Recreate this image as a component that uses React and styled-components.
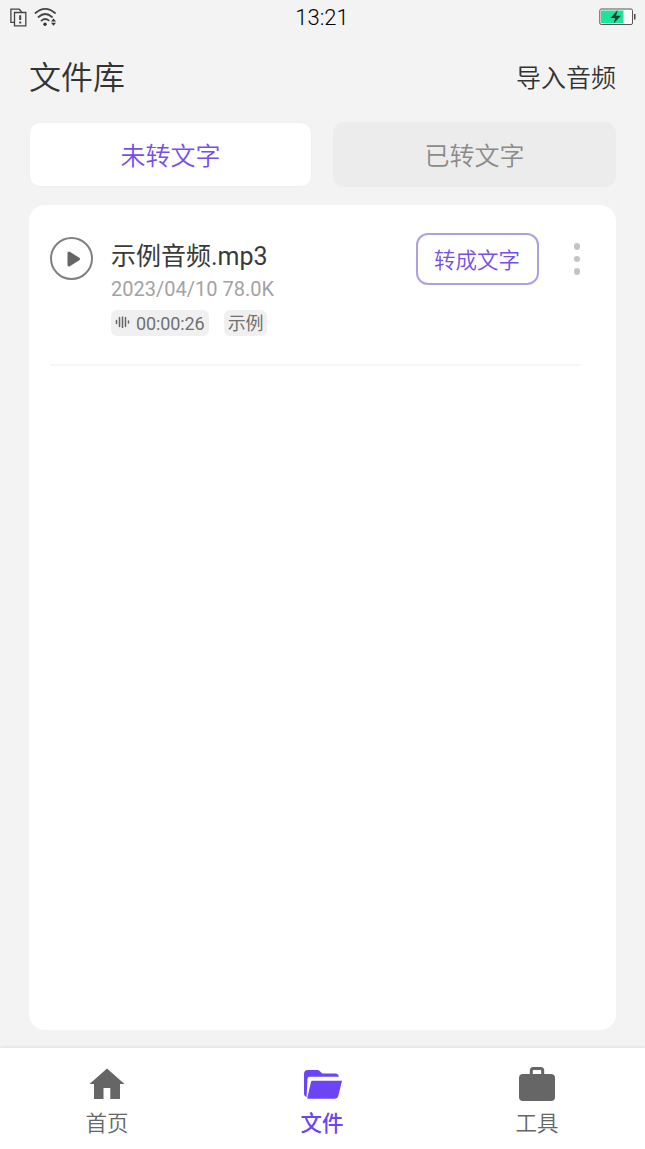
import React, { useState } from 'react';
import styled, { createGlobalStyle } from 'styled-components';

const tabs = ['未转文字', '已转文字'];

const files = [
  { name: '示例音频.mp3', date: '2023/04/10', size: '78.0K', duration: '00:00:26', tag: '示例' },
];

const HomeIcon = () => (
  <svg width="36" height="32" viewBox="0 0 36 32">
    <path d="M18 .5 35.5 16H31v15H21.300V20h-6.800v11H5V16H.5z" fill="currentColor" />
  </svg>
);

const FolderIcon = () => (
  <svg width="40" height="32" viewBox="0 0 40 32">
    <path
      d="M2 6a4 4 0 0 1 4-4h9.500a3 3 0 0 1 2.200 1l2.500 2.500H33.500a3.500 3.500 0 0 1 3.300 3.300H7.500a2 2 0 0 0-2 2L4.600 29C2.900 28.600 2 27.300 2 25.500z"
      fill="currentColor"
    />
    <path
      d="M10.700 12.700H40L36.300 28a3.500 3.500 0 0 1-3.400 2.700H5.900c-.5 0-.7-.3-.6-.8L9 14c.2-.9.8-1.300 1.700-1.300z"
      fill="currentColor"
    />
  </svg>
);

const BriefcaseIcon = () => (
  <svg width="38" height="36" viewBox="0 0 38 36">
    <path d="M13.300 10V4.500a2 2 0 0 1 2-2h7.400a2 2 0 0 1 2 2V10" fill="none" stroke="currentColor" strokeWidth="3" />
    <rect x="1" y="8" width="36" height="27" rx="4" fill="currentColor" />
  </svg>
);

const navItems = [
  { label: '首页', Icon: HomeIcon },
  { label: '文件', Icon: FolderIcon },
  { label: '工具', Icon: BriefcaseIcon },
];

const App = () => {
  const [activeTab, setActiveTab] = useState(0);
  const [activeNav, setActiveNav] = useState(1);

  return (
    <Screen>
      <GlobalStyle />
      <StatusBar>
        <StatusIcons>
          <svg width="17" height="19" viewBox="0 0 17 19" fill="none" stroke="#444" strokeWidth="1.300">
            <path d="M4.300 14.300H.9V1.200h8.300l2.500 2.800" />
            <path d="M4.500 4.500h11.300v13.300H4.500z" />
            <path d="M10.200 7.300v4.800M10.200 13.500v2" strokeWidth="2" />
          </svg>
          <svg width="23" height="20" viewBox="0 0 23 20" fill="none" stroke="#444" strokeWidth="1.800" strokeLinecap="round">
            <path d="M1.500 6Q11.200-2.300 21 6" />
            <path d="M4.500 10Q11.200 4 18 10" />
            <path d="M7.500 13.600Q11.200 10.500 14.700 13.400" />
            <circle cx="11" cy="17.200" r="1.700" fill="#333" stroke="none" />
            <path d="M19.500 11.500l2.500 3h-5zM19.500 18.700l2.500-3h-5z" fill="#333" stroke="none" />
          </svg>
        </StatusIcons>
        <Clock>13:21</Clock>
        <BatteryWrap>
          <svg width="37" height="18" viewBox="0 0 37 18">
            <rect x=".8" y="1" width="32.700" height="15.500" rx="1.500" fill="#fafafa" stroke="#555" />
            <path d="M2 2.500h22.500V15H2z" fill="#1fe39b" />
            <path d="M35 6h1.500v5.500H35z" fill="#444" />
            <path d="M18.700 2 11.500 10h4.700l-1.700 5.700 7.400-8h-4.800z" fill="#153f30" />
          </svg>
        </BatteryWrap>
      </StatusBar>

      <Header>
        <Title>文件库</Title>
        <ImportButton>导入音频</ImportButton>
      </Header>

      <Tabs>
        {tabs.map((tab, i) => (
          <Tab key={tab} $active={i === activeTab} onClick={() => setActiveTab(i)}>
            {tab}
          </Tab>
        ))}
      </Tabs>

      <Panel>
        {files.map((file) => (
          <FileRow key={file.name}>
            <PlayButton>
              <svg width="16" height="18" viewBox="0 0 16 18">
                <path d="M3 3v12L12.500 9z" fill="#666" stroke="#666" strokeWidth="3" strokeLinejoin="round" />
              </svg>
            </PlayButton>
            <FileInfo>
              <FileName>{file.name}</FileName>
              <FileMeta>
                {file.date} {file.size}
              </FileMeta>
              <Tags>
                <Tag>
                  <Waveform width="15" height="12" viewBox="0 0 15 12">
                    <path d="M1.500 4.500v3M4.500 1.500v9M7.500 1v10.500M10.500 1.500v9M13.500 5v2" />
                  </Waveform>
                  {file.duration}
                </Tag>
                <Tag>{file.tag}</Tag>
              </Tags>
            </FileInfo>
            <ConvertButton>转成文字</ConvertButton>
            <MoreButton>
              <Dot />
              <Dot />
              <Dot />
            </MoreButton>
          </FileRow>
        ))}
      </Panel>

      <BottomNav>
        {navItems.map(({ label, Icon }, i) => (
          <NavItem key={label} $active={i === activeNav} onClick={() => setActiveNav(i)}>
            <NavIcon>
              <Icon />
            </NavIcon>
            {label}
          </NavItem>
        ))}
      </BottomNav>
    </Screen>
  );
};

const GlobalStyle = createGlobalStyle`
  * {
    box-sizing: border-box;
  }

  body {
    margin: 0;
    background: #f3f3f3;
    font-family: Roboto, 'Noto Sans CJK SC', sans-serif;
    font-weight: 350;
  }

  button {
    margin: 0;
    padding: 0;
    border: none;
    background: none;
    font-family: inherit;
    font-weight: inherit;
    cursor: pointer;
  }

  svg {
    display: block;
    flex-shrink: 0;
  }
`;

const Screen = styled.div`
  display: flex;
  flex-direction: column;
  height: 100vh;
  overflow: hidden;
  background: #f3f3f3;
`;

const StatusBar = styled.div`
  display: grid;
  grid-template-columns: 1fr auto 1fr;
  align-items: center;
  height: 34px;
  padding: 0 9px 0 10px;
`;

const StatusIcons = styled.div`
  display: flex;
  align-items: center;
  gap: 7px;
`;

const Clock = styled.span`
  padding: 2px 2px 0 0;
  font-size: 22px;
  line-height: 32px;
  color: #000;
`;

const BatteryWrap = styled.div`
  justify-self: end;
`;

const Header = styled.header`
  display: flex;
  align-items: center;
  justify-content: space-between;
  height: 88px;
  padding: 0 29px;
`;

const Title = styled.h1`
  margin: 0;
  font-size: 32px;
  font-weight: inherit;
  line-height: 40px;
  color: #333;
`;

const ImportButton = styled.button`
  padding-top: 2px;
  font-size: 25px;
  line-height: 32px;
  color: #333;
`;

const Tabs = styled.div`
  display: grid;
  grid-template-columns: 1fr 1fr;
  gap: 21px;
  height: 65px;
  padding: 0 29px;
`;

const Tab = styled.button`
  padding-bottom: 1px;
  border: 1px solid ${({ $active }) => ($active ? '#f0f0f0' : '#ececec')};
  border-radius: 11px;
  background: ${({ $active }) => ($active ? '#fff' : '#ececec')};
  font-size: 25px;
  color: ${({ $active }) => ($active ? '#7350ea' : '#8a8a8a')};
`;

const Panel = styled.main`
  flex: 1;
  margin: 18px 29px;
  padding: 0 35px 0 21px;
  border-radius: 16px;
  background: #fff;
`;

const FileRow = styled.div`
  display: flex;
  align-items: flex-start;
  height: 161px;
  padding-top: 28px;
  border-bottom: 2px solid #f6f6f6;
`;

const PlayButton = styled.button`
  display: flex;
  align-items: center;
  justify-content: center;
  width: 43px;
  height: 43px;
  margin-top: 4px;
  padding-left: 4px;
  border: 2px solid #808080;
  border-radius: 50%;
`;

const FileInfo = styled.div`
  flex: 1;
  margin-left: 18px;
`;

const FileName = styled.div`
  margin-top: 6px;
  font-size: 25px;
  font-weight: 400;
  line-height: 36px;
  color: #3a3a3a;
`;

const FileMeta = styled.div`
  font-size: 20px;
  font-weight: 400;
  line-height: 28px;
  color: #a3a3a3;
`;

const Tags = styled.div`
  display: flex;
  gap: 15px;
  margin-top: 7px;
`;

const Tag = styled.span`
  display: flex;
  align-items: center;
  gap: 6px;
  height: 26px;
  padding: 2px 4px 0;
  border-radius: 6px;
  background: #f0f0f0;
  font-size: 18px;
  font-weight: 400;
  line-height: 26px;
  letter-spacing: -0.1px;
  color: #707070;
`;

const Waveform = styled.svg`
  margin-bottom: 4px;
  stroke: #666;
  stroke-width: 1.5;
  stroke-linecap: round;
`;

const ConvertButton = styled.button`
  width: 123px;
  height: 52px;
  margin-right: 1px;
  padding-bottom: 1px;
  border: 2px solid #b0a0e2;
  border-radius: 12px;
  font-size: 21.5px;
  color: #7350ea;
`;

const MoreButton = styled.button`
  display: flex;
  flex-direction: column;
  align-items: center;
  gap: 6px;
  margin: 10px 1px 0 34px;
`;

const Dot = styled.span`
  width: 6.5px;
  height: 6.5px;
  border-radius: 50%;
  background: #c4c4c4;
`;

const BottomNav = styled.nav`
  display: grid;
  grid-template-columns: repeat(3, 1fr);
  height: 101px;
  background: #fff;
  box-shadow: 0 -1px 3px rgba(0, 0, 0, 0.08);
`;

const NavItem = styled.button`
  display: flex;
  flex-direction: column;
  align-items: center;
  padding: 17px 1px 0 0;
  font-size: 21.5px;
  font-weight: ${({ $active }) => ($active ? 500 : 350)};
  line-height: 30px;
  color: ${({ $active }) => ($active ? '#6b45f5' : '#666')};
`;

const NavIcon = styled.span`
  display: flex;
  align-items: center;
  justify-content: center;
  height: 38px;
  margin-bottom: 6px;
`;

export default App;
